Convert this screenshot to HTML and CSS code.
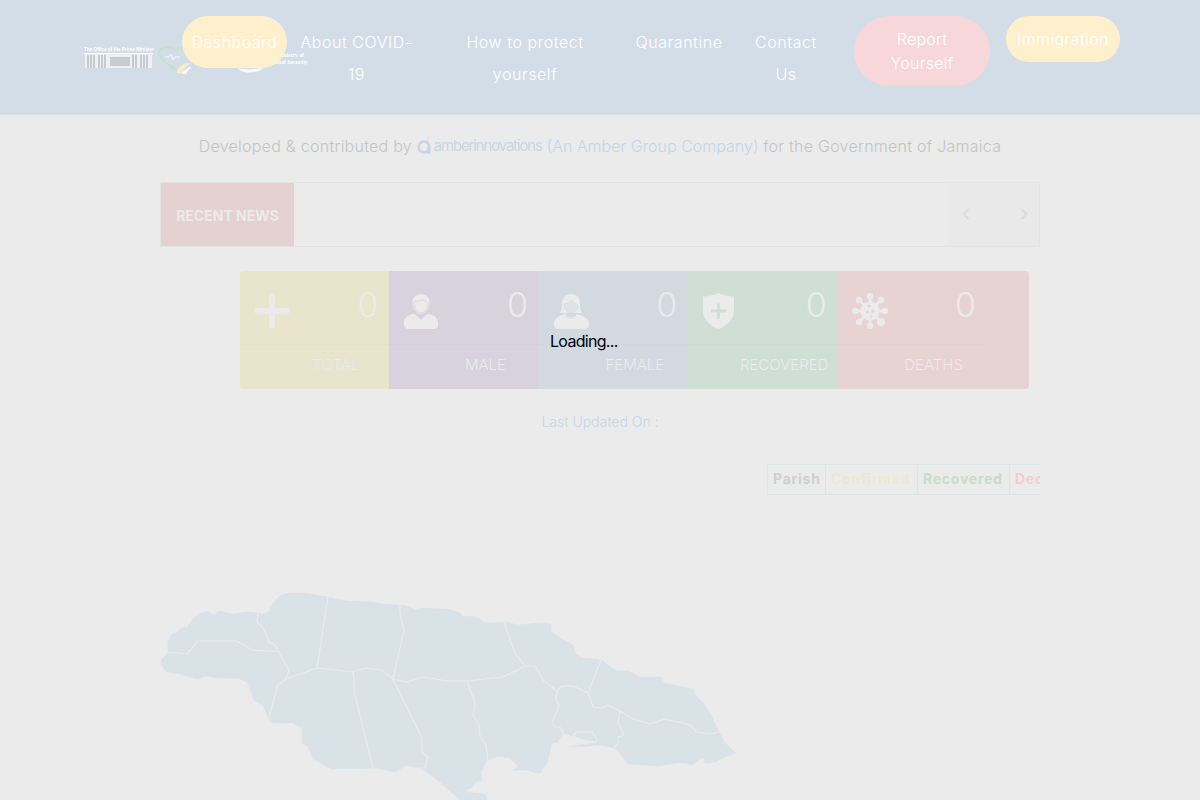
FILE: index.html
```html
<!DOCTYPE html>
<html lang="en">
<head>
<meta charset="utf-8">
<title>COVID-19 Jamaica</title>
<link rel="stylesheet" href="styles.css">
</head>
<body>
<header class="site-header">
  <div class="logos">
    <svg class="logo-svg" width="226" height="28" viewBox="0 0 226 28" aria-hidden="true">
      <text class="logo-tiny" x="1" y="5" textLength="70" lengthAdjust="spacingAndGlyphs">The Office of the Prime Minister</text>
      <rect x="1" y="7" width="69" height="1.500" fill="#fff"/>
      <path d="M2 9h67v13H2z" fill="#eef1f4"/>
      <path d="M5 9v13M8 9v13M11 9v13M16 9v13M19 9v13M22 9v13M50 9v13M53 9v13M58 9v13M61 9v13M64 9v13" stroke="#aab1b8" stroke-width="1.200"/>
      <path d="M27 11h20v9H27z" fill="#c6ccd2"/>
      <path d="M92 23C81 16 75 10 76 6c1-5 9-7 16-2 5-4 13-4 16 0" fill="none" stroke="#bde3c9" stroke-width="1.700"/>
      <path d="M82 11h4l2-3 2 6 2-3h5" fill="none" stroke="#fff" stroke-width=".8"/>
      <path d="M94 26c1-6 8-9 14-9-3 2-7 4-8 9-1 2-5 2-6 0z" fill="#f8edc4"/>
      <path d="M99 28c2-4 6-7 10-7-3 2-5 4-6 7z" fill="#fff"/>
      <text class="logo-tiny logo-right" x="221" y="11">Ministry of</text>
      <text class="logo-tiny logo-right" x="225" y="18">National Security</text>
      <path class="logo-crest" d="M154 21c4 3 6 1 9 2 3 1 7 0 17-1-3 3-7 4-10 4-3 1-6 1-8 0-3 0-6-2-8-5z" fill="#fff"/>
    </svg>
  </div>
  <nav class="main-nav">
    <a class="nav-item nav-dashboard" href="#">Dashboard</a>
    <a class="nav-item nav-about" href="#">About COVID-19</a>
    <a class="nav-item nav-protect" href="#">How to protect yourself</a>
    <a class="nav-item nav-quarantine" href="#">Quarantine</a>
    <a class="nav-item nav-contact" href="#">Contact Us</a>
    <a class="pill-btn pill-report" href="#">Report Yourself</a>
    <a class="pill-btn pill-immigration" href="#">Immigration</a>
  </nav>
</header>

<main class="content">
  <p class="credit">Developed &amp; contributed by
    <span class="amber-logo"><svg class="amber-mark" width="15" height="19" viewBox="0 0 15 19" aria-hidden="true"><circle cx="7" cy="11" r="5.300" fill="none" stroke="#c9d5e1" stroke-width="2.800"/><path d="M10 11h3.700v6.500H10z" fill="#c9d5e1"/><circle cx="11" cy="1.500" r="1" fill="#eed5c5"/><circle cx="11" cy="4.500" r="1" fill="#eed5c5"/></svg><span class="amber-word">amberinnovations</span></span>
    <span class="credit-link">(An Amber Group Company)</span> for the Government of Jamaica</p>

  <section class="news-bar">
    <div class="news-label">RECENT NEWS</div>
    <div class="news-track"></div>
    <div class="news-controls">
      <div class="news-cell news-prev"><svg width="8" height="12" viewBox="0 0 8 12" aria-hidden="true"><path d="M6.500 1 1.500 6l5 5" fill="none" stroke="#dcdcdc" stroke-width="2"/></svg></div>
      <div class="news-cell"></div>
      <div class="news-cell news-next"><svg width="8" height="12" viewBox="0 0 8 12" aria-hidden="true"><path d="m1.500 1 5 5-5 5" fill="none" stroke="#dcdcdc" stroke-width="2"/></svg></div>
    </div>
  </section>

  <section class="stats">
    <article class="stat stat-total">
      <div class="stat-top">
        <svg class="stat-icon" width="36" height="36" viewBox="0 0 36 36" aria-hidden="true"><path d="M15 3.500a3 3 0 0 1 6 0V15h11.500a3 3 0 0 1 0 6H21v11.500a3 3 0 0 1-6 0V21H3.500a3 3 0 0 1 0-6H15z" fill="#ebebeb"/></svg>
        <span class="stat-num">0</span>
      </div>
      <div class="stat-label">TOTAL</div>
    </article>
    <article class="stat stat-male">
      <div class="stat-top">
        <svg class="stat-icon" width="36" height="36" viewBox="0 0 36 36" aria-hidden="true"><path d="M18 1c6 0 9 4 8.500 9-.4 5-3.500 11-8.500 11S9.900 15 9.500 10C9 5 12 1 18 1z" fill="#ebebeb"/><path d="M11 8c2 1 5 0 8-1 2 0 5 1 6 3 0 5-3 10-7 10s-7-6-7-12z" fill="none" stroke="#d8d1de" stroke-width=".9"/><path d="M11 20.500 18 27l7-6.500c5 1 10 4 10 9V32c0 2-1 4-4 4H6c-3 0-5-2-5-4v-2.500c0-5 5-8 10-9z" fill="#ebebeb"/></svg>
        <span class="stat-num">0</span>
      </div>
      <div class="stat-label">MALE</div>
    </article>
    <article class="stat stat-female">
      <div class="stat-top">
        <svg class="stat-icon" width="36" height="36" viewBox="0 0 36 36" aria-hidden="true"><path d="M18 1c7 0 9 5 9 10 0 5 1 7 2 9H7c1-2 2-4 2-9 0-5 2-10 9-10z" fill="#ebebeb"/><path d="M11 11c3 0 6-2 8-4 2 3 4 4 6 5-.5 4-3 8-7 8s-6.500-4-7-9z" fill="#dfe3e7" stroke="#d2d9e1" stroke-width=".8"/><path d="M12 21c2 4 10 4 12 0 6 2 12 4 12 9v2c0 2-2 4-4 4H5c-2 0-4-2-4-4v-2c0-5 5-7 11-9z" fill="#ebebeb"/><path d="M13 23c3 3 7 3 10 0" fill="none" stroke="#d2d9e1" stroke-width=".9"/></svg>
        <span class="stat-num">0</span>
      </div>
      <div class="stat-label">FEMALE</div>
    </article>
    <article class="stat stat-recovered">
      <div class="stat-top">
        <svg class="stat-icon" width="36" height="36" viewBox="0 0 36 36" aria-hidden="true"><path d="M16.500 0c4 2 10 3.500 15.500 3.500V18c0 9-8 15-15.500 18C9 33 1 27 1 18V3.500C6.500 3.500 12.500 2 16.500 0z" fill="#ebebeb"/><path d="M15 10.500h3V16.500h6v3h-6v6h-3v-6H9v-3h6z" fill="#d0dfd5"/></svg>
        <span class="stat-num">0</span>
      </div>
      <div class="stat-label">RECOVERED</div>
    </article>
    <article class="stat stat-deaths">
      <div class="stat-top">
        <svg class="stat-icon" width="36" height="36" viewBox="0 0 36 36" aria-hidden="true"><g stroke="#ebebeb" stroke-width="2.800"><path d="M18 4v28M4 18h28M8 8l20 20M28 8 8 28"/></g><circle cx="18" cy="18" r="9.500" fill="#ebebeb"/><g fill="#ebebeb"><circle cx="18" cy="3.200" r="3.200"/><circle cx="18" cy="32.800" r="3.200"/><circle cx="3.200" cy="18" r="3.200"/><circle cx="32.800" cy="18" r="3.200"/><circle cx="7" cy="7" r="3.200"/><circle cx="29" cy="7" r="3.200"/><circle cx="7" cy="29" r="3.200"/><circle cx="29" cy="29" r="4"/></g><g fill="#e7d2d4"><circle cx="17" cy="13" r="1.500"/><circle cx="21" cy="18" r="1.800"/><circle cx="15.500" cy="19" r="1.500"/><circle cx="19" cy="23.500" r="1.200"/></g></svg>
        <span class="stat-num">0</span>
      </div>
      <div class="stat-label">DEATHS</div>
    </article>
  </section>

  <p class="updated">Last Updated On :</p>

  <div class="table-wrap">
    <table class="parish-table">
      <thead>
        <tr>
          <th class="th-parish">Parish</th>
          <th class="th-confirmed">Confirmed</th>
          <th class="th-recovered">Recovered</th>
          <th class="th-deceased">Deceased</th>
        </tr>
      </thead>
    </table>
  </div>

  <svg class="island" width="580" height="210" viewBox="160 590 580 210" aria-label="Map of Jamaica">
    <path class="land" d="M161 660L168 653L168 642L172 634L177 633L182 627L187 628L191 621L198 614L207 611L214 615L219 611L232 614L248 612L258 613L263 614L269 612L271 607L278 597L285 594L298 593L310 594L328 597L347 601L373 602L383 604L400 605L410 607L415 610L422 608L440 609L452 610L460 613L463 617L470 616L478 618L485 623L495 623L505 622L518 625L540 623L551 624L551 632L560 638L573 645L576 654L582 658L602 660L610 667L618 671L628 671L639 677L661 677L664 683L693 689L695 695L705 705L712 717L719 732L725 743L736 753L727 756L715 762L705 763L704 758L698 760L693 765L685 763L677 763L657 766L628 764L623 757L615 748L598 745L585 746.500L568 746.500L585 744.500L595 743L563 733L558 742L552 743L547 763L540 773L535 773L528 770L513 770L519 767L510 758L498 756L487 760L481 772L482 780L475 782L473 787L465 791L472 793L485 794L487 800L460 800L440 782L422 769L407 765L395 772L377 768L332 769L313 759L308 747L302 743L302 728L293 723L273 723L268 717L263 705L254 700L247 682L238 678L218 678L205 676L198 679L180 674L167 672L161 665Z"/>
    <g class="borders">
      <path d="M168 652L187 654L198 641L237 641L252 650L279 652"/>
      <path d="M258 613L257 622L263 628L269 642L275 645L279 652L284 661L289 670L286 679L278 685L275 695L269 717"/>
      <path d="M328 597L317 668L286 679"/>
      <path d="M317 668L353 672L365 668L382 670L393 679L404 630L402 622L400 613L400 605"/>
      <path d="M353 672L355 695L373 768"/>
      <path d="M393 679L407 682L423 677L447 681L467 681L503 677L525 666L535 666L543 680L557 691L562 686L573 686L588 693L601 660"/>
      <path d="M393 679L422 738L422 752L428 757L425 768L418 768"/>
      <path d="M467 681L475 703L473 715L479 725L480 737L486 745L488 760"/>
      <path d="M504 622L510 640L515 653L525 666"/>
      <path d="M557 691L556 700L559 706L552 722L555 727L560 727L563 733"/>
      <path d="M588 693L593 707L603 708L607 705L620 711L633 719L650 724L665 719L690 725L697 732L710 734L719 732"/>
      <path d="M620 712L618 723L624 735L618 737L618 743L614 748"/>
      <path d="M573 735L577 732L592 732L597 740L595 743M573 735L577 739L595 742"/>
    </g>
  </svg>
</main>

<div class="loading">Loading...</div>
</body>
</html>
```

FILE: styles.css
```css
* { box-sizing: border-box; }
html, body { margin: 0; padding: 0; height: 800px; overflow: hidden; }
body {
  background: #ebebeb;
  color: #c4c4c4;
  font-family: Inter, "Liberation Sans", sans-serif;
  font-size: 16px;
  font-weight: 300;
  position: relative;
}
a { text-decoration: none; color: inherit; }

.site-header {
  height: 115px;
  background: #d3dde8;
  display: flex;
  align-items: flex-start;
  padding: 16px 80px 0 83px;
}
.logos { width: 99px; flex: none; padding-top: 30px; }
.logo-svg { display: block; filter: blur(.4px); }
.logo-tiny { font: 700 5.800px "Liberation Sans", sans-serif; fill: #fff; }
.logo-right { text-anchor: end; font-family: "Liberation Serif", serif; }
.logo-crest { opacity: .8; }
.main-nav { display: flex; align-items: flex-start; color: #fff; position: relative; letter-spacing: .55px; }

.nav-item {
  display: block;
  padding: 10px 12px;
  text-align: center;
  line-height: 32px;
}
.nav-dashboard { width: 105px; padding: 10px 5px; background: #fff0cd; border-radius: 26px; }
.nav-about { width: 139px; }
.nav-protect { width: 198px; padding: 10px 36px; }
.nav-quarantine { width: 110px; padding: 10px 5px; }
.nav-contact { width: 104px; padding: 10px 16px; }

.pill-btn {
  display: block;
  padding: 11px;
  text-align: center;
  line-height: 24px;
  border-radius: 35px;
  letter-spacing: .25px;
}
.pill-report { width: 136px; margin-left: 16px; background: #f8d7da; padding: 11px 30px; }
.pill-immigration { width: 114px; margin-left: 16px; background: #fff0cd; border-radius: 23px; padding: 11px 5px; letter-spacing: .4px; }

.content { width: 880px; margin: 0 auto; }
.credit {
  margin: 0;
  height: 67px;
  padding-top: 19px;
  text-align: center;
  line-height: 24px;
  white-space: nowrap;
  font-weight: 300;
  letter-spacing: .25px;
}
.amber-logo { display: inline-flex; align-items: flex-start; gap: 2px; vertical-align: -3px; filter: blur(.25px); }
.amber-mark { margin-top: -2px; }
.amber-word { color: #c9d5e1; letter-spacing: -1.150px; font-size: 15px; line-height: 16px; font-weight: 400; }
.credit-link { color: #c5d5e8; letter-spacing: 0; }

.news-bar {
  height: 65px;
  display: flex;
  border: 1px solid #e3e3e3;
}
.news-label {
  width: 133px;
  background: #e5d0d2;
  color: #ebebeb;
  font-weight: 700;
  font-size: 14px;
  padding-top: 1px;
  display: flex;
  align-items: center;
  justify-content: center;
  white-space: nowrap;
}
.news-track { flex: 1; }
.news-controls {
  display: grid;
  grid-template-columns: 30px 30px 30px;
  width: 91px;
  padding-left: 1px;
  background: #e9e9e9;
}
.news-cell {
  border-left: 1px solid #e8e8e8;
  display: flex;
  align-items: center;
  justify-content: center;
  padding-bottom: 2px;
}
.news-prev { padding-left: 2px; }
.news-next { padding-right: 2px; }

.stats {
  display: grid;
  grid-template-columns: 149.400px 149.400px 149.400px 149.400px 191.400px;
  margin: 24px 0 0 80px;
  width: 789px;
  height: 118px;
  border-radius: 4px;
  overflow: hidden;
}
.stat { color: #ebebeb; }
.stat-total { background: #e9e4cc; }
.stat-male { background: #d8d1de; }
.stat-female { background: #d2d9e1; }
.stat-recovered { background: #d0dfd5; }
.stat-deaths { background: #e7d2d4; }
.stat-top {
  width: 149px;
  height: 74px;
  display: flex;
  justify-content: space-between;
  padding: 14px 10.500px 0 14px;
  border-bottom: 1px solid rgba(0, 0, 0, .012);
}
.stat-icon { margin-top: 8px; display: block; }
.stat-num { font-size: 34px; line-height: 40px; font-weight: 300; }
.stat-label {
  width: 149px;
  padding-left: 43px;
  text-align: center;
  line-height: 40px;
  font-size: 15px;
  font-weight: 300;
}

.updated {
  margin: 21px 0 0;
  height: 24px;
  line-height: 24px;
  text-align: center;
  color: #c5d5e8;
  font-size: 14px;
  font-weight: 300;
}

.table-wrap {
  margin-top: 30px;
  padding-left: 607px;
  width: 880px;
  height: 31px;
  overflow: hidden;
}
.parish-table { border-collapse: collapse; table-layout: fixed; width: 334px; }
.parish-table th {
  border: 1px solid #dde4e4;
  height: 30px;
  padding: 0 5px 3px;
  font-size: 14px;
  font-weight: 700;
  text-align: left;
  letter-spacing: .75px;
  white-space: nowrap;
}
.th-parish { width: 58px; color: #cfcfcf; }
.th-confirmed { width: 92px; color: #efe7cf; }
.th-recovered { width: 92px; color: #c9dccd; }
.th-deceased { width: 92px; color: #f0cfd2; }

.island { display: block; margin-top: 95px; }
.land { fill: #d9e2e7; stroke: #d9e2e7; stroke-width: .6; stroke-linejoin: round; }
.borders path { fill: none; stroke: #ebebeb; stroke-width: 1.200; stroke-linejoin: round; }

.loading {
  position: absolute;
  left: 550px;
  top: 329px;
  color: #000;
  line-height: 24px;
  font-weight: 400;
  letter-spacing: -.7px;
}
```
